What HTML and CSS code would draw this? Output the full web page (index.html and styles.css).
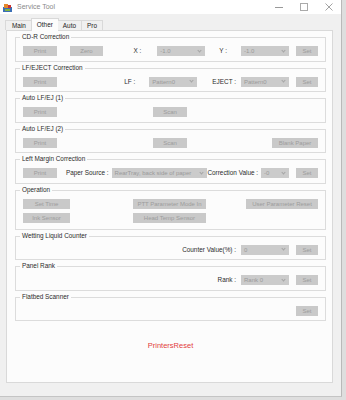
FILE: index.html
```html
<!DOCTYPE html>
<html lang="en">
<head>
    <meta charset="UTF-8">
    <meta name="viewport" content="width=device-width, initial-scale=1.0">
    <title>Service Tool</title>
    <link rel="stylesheet" href="styles.css">
</head>
<body>
    <div class="window">
        <!-- Title bar -->
        <div class="titlebar">
            <svg class="app-icon" width="9" height="9" viewBox="0 0 9 9">
                <rect x="0" y="4" width="9" height="5" fill="#3b6fb6"/>
                <rect x="1" y="1" width="4" height="4" fill="#e5892c"/>
                <rect x="5" y="2" width="3" height="3" fill="#c33"/>
                <rect x="2" y="6" width="5" height="2" fill="#7fb341"/>
            </svg>
            <span class="title">Service Tool</span>
            <div class="controls">
                <svg width="8" height="8" viewBox="0 0 8 8"><line x1="0" y1="4.5" x2="8" y2="4.5" stroke="#999" stroke-width="1"/></svg>
                <svg width="8" height="8" viewBox="0 0 8 8"><rect x="0.5" y="0.5" width="7" height="7" fill="none" stroke="#aaa" stroke-width="1"/></svg>
                <svg width="8" height="8" viewBox="0 0 8 8"><path d="M0.5 0.5 L7.5 7.5 M7.5 0.5 L0.5 7.5" stroke="#999" stroke-width="0.9"/></svg>
            </div>
        </div>

        <div class="client">
            <!-- Tabs -->
            <div class="tabs">
                <div class="tab">Main</div>
                <div class="tab active">Other</div>
                <div class="tab">Auto</div>
                <div class="tab">Pro</div>
            </div>

            <div class="panel">
                <div class="group">
                    <div class="group-title">CD-R Correction</div>
                    <div class="row">
                        <button class="btn btn-sm" disabled>Print</button>
                        <button class="btn btn-sm zero" disabled>Zero</button>
                        <span class="lbl push">X :</span>
                        <div class="select gap-x">-1.0<i class="chev"></i></div>
                        <span class="lbl y-lbl">Y :</span>
                        <div class="select gap-y">-1.0<i class="chev"></i></div>
                        <button class="btn set" disabled>Set</button>
                    </div>
                </div>

                <div class="group">
                    <div class="group-title">LF/EJECT Correction</div>
                    <div class="row">
                        <button class="btn btn-sm" disabled>Print</button>
                        <span class="lbl push">LF :</span>
                        <div class="select gap-lf">Pattern0<i class="chev"></i></div>
                        <span class="lbl eject-lbl">EJECT :</span>
                        <div class="select gap-ej">Pattern0<i class="chev"></i></div>
                        <button class="btn set" disabled>Set</button>
                    </div>
                </div>

                <div class="group">
                    <div class="group-title">Auto LF/EJ (1)</div>
                    <div class="row">
                        <button class="btn btn-sm" disabled>Print</button>
                        <button class="btn btn-sm scan" disabled>Scan</button>
                    </div>
                </div>

                <div class="group">
                    <div class="group-title">Auto LF/EJ (2)</div>
                    <div class="row">
                        <button class="btn btn-sm" disabled>Print</button>
                        <button class="btn btn-sm scan" disabled>Scan</button>
                        <button class="btn blank push" disabled>Blank Paper</button>
                    </div>
                </div>

                <div class="group">
                    <div class="group-title">Left Margin Correction</div>
                    <div class="row">
                        <button class="btn btn-sm" disabled>Print</button>
                        <span class="lbl source-lbl">Paper Source :</span>
                        <div class="select select-wide">RearTray, back side of paper<i class="chev"></i></div>
                        <span class="lbl push">Correction Value :</span>
                        <div class="select select-tiny">-0<i class="chev"></i></div>
                        <button class="btn set" disabled>Set</button>
                    </div>
                </div>

                <div class="group group-tall">
                    <div class="group-title">Operation</div>
                    <div class="ops">
                        <button class="btn op-a" disabled>Set Time</button>
                        <button class="btn op-b" disabled>PTT Parameter Mode In</button>
                        <button class="btn op-c" disabled>User Parameter Reset</button>
                        <button class="btn op-a" disabled>Ink Sensor</button>
                        <button class="btn op-b" disabled>Head Temp Sensor</button>
                    </div>
                </div>

                <div class="group">
                    <div class="group-title">Wetting Liquid Counter</div>
                    <div class="row">
                        <span class="lbl push">Counter Value(%) :</span>
                        <div class="select gap-ej">0<i class="chev"></i></div>
                        <button class="btn set" disabled>Set</button>
                    </div>
                </div>

                <div class="group">
                    <div class="group-title">Panel Rank</div>
                    <div class="row">
                        <span class="lbl push">Rank :</span>
                        <div class="select gap-ej">Rank 0<i class="chev"></i></div>
                        <button class="btn set" disabled>Set</button>
                    </div>
                </div>

                <div class="group">
                    <div class="group-title">Flatbed Scanner</div>
                    <div class="row">
                        <button class="btn set set-only" disabled>Set</button>
                    </div>
                </div>

                <p class="brand">PrintersReset</p>
            </div>
        </div>
    </div>
</body>
</html>
```

FILE: styles.css
```css
/* Global Styles */
* {
    margin: 0;
    padding: 0;
    box-sizing: border-box;
}
body {
    width: 346px;
    height: 400px;
    background: #dedede;
    font-family: "Liberation Sans", Arial, sans-serif;
    font-size: 6.4px;
    color: #2b2b2b;
    overflow: hidden;
}
/* Window */
.window {
    width: 342px;
    height: 397px;
    background: #f0f0f0;
    border-right: 1px solid #b9b9b9;
    border-bottom: 1px solid #c4c4c4;
}
.titlebar {
    height: 14px;
    background: #fff;
    display: flex;
    align-items: center;
    padding-left: 3px;
}
.app-icon {
    display: block;
}
.title {
    margin-left: 5px;
    font-size: 7px;
    line-height: 10px;
    color: #8a8a8a;
}
.controls {
    margin-left: auto;
    display: flex;
    align-items: center;
    gap: 17px;
    padding-right: 8px;
}
.controls svg {
    display: block;
}
/* Tabs */
.client {
    padding: 5px 8px 0 6px;
}
.tabs {
    display: flex;
    align-items: flex-end;
    height: 11px;
    margin-left: -1px;
    position: relative;
    z-index: 1;
}
.tab {
    height: 10px;
    line-height: 10px;
    padding: 0 5px;
    border: 1px solid #d9d9d9;
    border-bottom: none;
    border-left: none;
    background: #f0f0f0;
    color: #222;
}
.tab:first-child {
    border-left: 1px solid #d9d9d9;
    padding: 0 5px 0 6px;
}
.tab.active {
    height: 13px;
    margin-bottom: -1px;
    margin-left: -1px;
    margin-right: -1px;
    padding: 0 5px;
    background: #fcfcfc;
    border-left: 1px solid #d9d9d9;
    line-height: 11px;
}
/* Tab page */
.panel {
    height: 353px;
    background: #fcfcfc;
    border: 1px solid #d9d9d9;
    padding: 6px 6px 0 8px;
}
.group {
    height: 24.5px;
    border: 1px solid #dcdcdc;
    margin-bottom: 6px;
    padding: 0 7px;
}
.group-tall {
    height: 40px;
}
.group-title {
    width: fit-content;
    margin: -5px 0 0 -3px;
    padding: 0 2px;
    line-height: 8px;
    background: #fcfcfc;
}
.row {
    display: flex;
    align-items: center;
    height: 10px;
    margin-top: 5px;
}
.lbl {
    line-height: 10px;
    white-space: nowrap;
}
/* Controls */
.btn {
    display: block;
    height: 10px;
    border: none;
    background: #c9c9c9;
    color: #9c9c9c;
    font-family: inherit;
    font-size: 6px;
    line-height: 10px;
    text-align: center;
    white-space: nowrap;
}
.btn-sm {
    width: 34px;
}
.zero {
    width: 33px;
    margin-left: 13px;
}
.scan {
    margin-left: 96px;
}
.set {
    width: 22px;
    margin-left: 7px;
}
.blank {
    width: 46px;
}
.push,
.set-only {
    margin-left: auto;
}
.select {
    display: flex;
    align-items: center;
    justify-content: space-between;
    width: 48px;
    height: 10px;
    padding: 0 4px 0 3px;
    background: #cbcbcb;
    color: #9a9a9a;
    font-size: 6px;
    line-height: 10px;
    white-space: nowrap;
    overflow: hidden;
}
.chev {
    flex: none;
    width: 3px;
    height: 3px;
    margin-top: -2px;
    margin-left: 2px;
    border-right: 1px solid #a5a5a5;
    border-bottom: 1px solid #a5a5a5;
    transform: rotate(45deg);
}
.gap-x {
    margin-left: 16px;
}
.y-lbl {
    margin-left: 14px;
}
.gap-y {
    margin-left: 14px;
}
.gap-lf {
    margin-left: 14px;
}
.eject-lbl {
    margin-left: 15px;
}
.gap-ej {
    margin-left: 5px;
}
.source-lbl {
    margin-left: 9px;
}
.select-wide {
    width: 96px;
    margin-left: 3px;
}
.select-tiny {
    width: 28px;
    margin-left: 3px;
}
/* Operation buttons */
.ops {
    display: grid;
    grid-template-columns: 110px 113px 1fr;
    row-gap: 4px;
    margin-top: 5px;
}
.op-a {
    width: 47px;
}
.op-b {
    width: 73px;
}
.op-c {
    width: 72px;
}
/* Footer brand */
.brand {
    margin-top: 20px;
    text-align: center;
    font-size: 7.5px;
    line-height: 10px;
    color: #e23c3c;
}
```
